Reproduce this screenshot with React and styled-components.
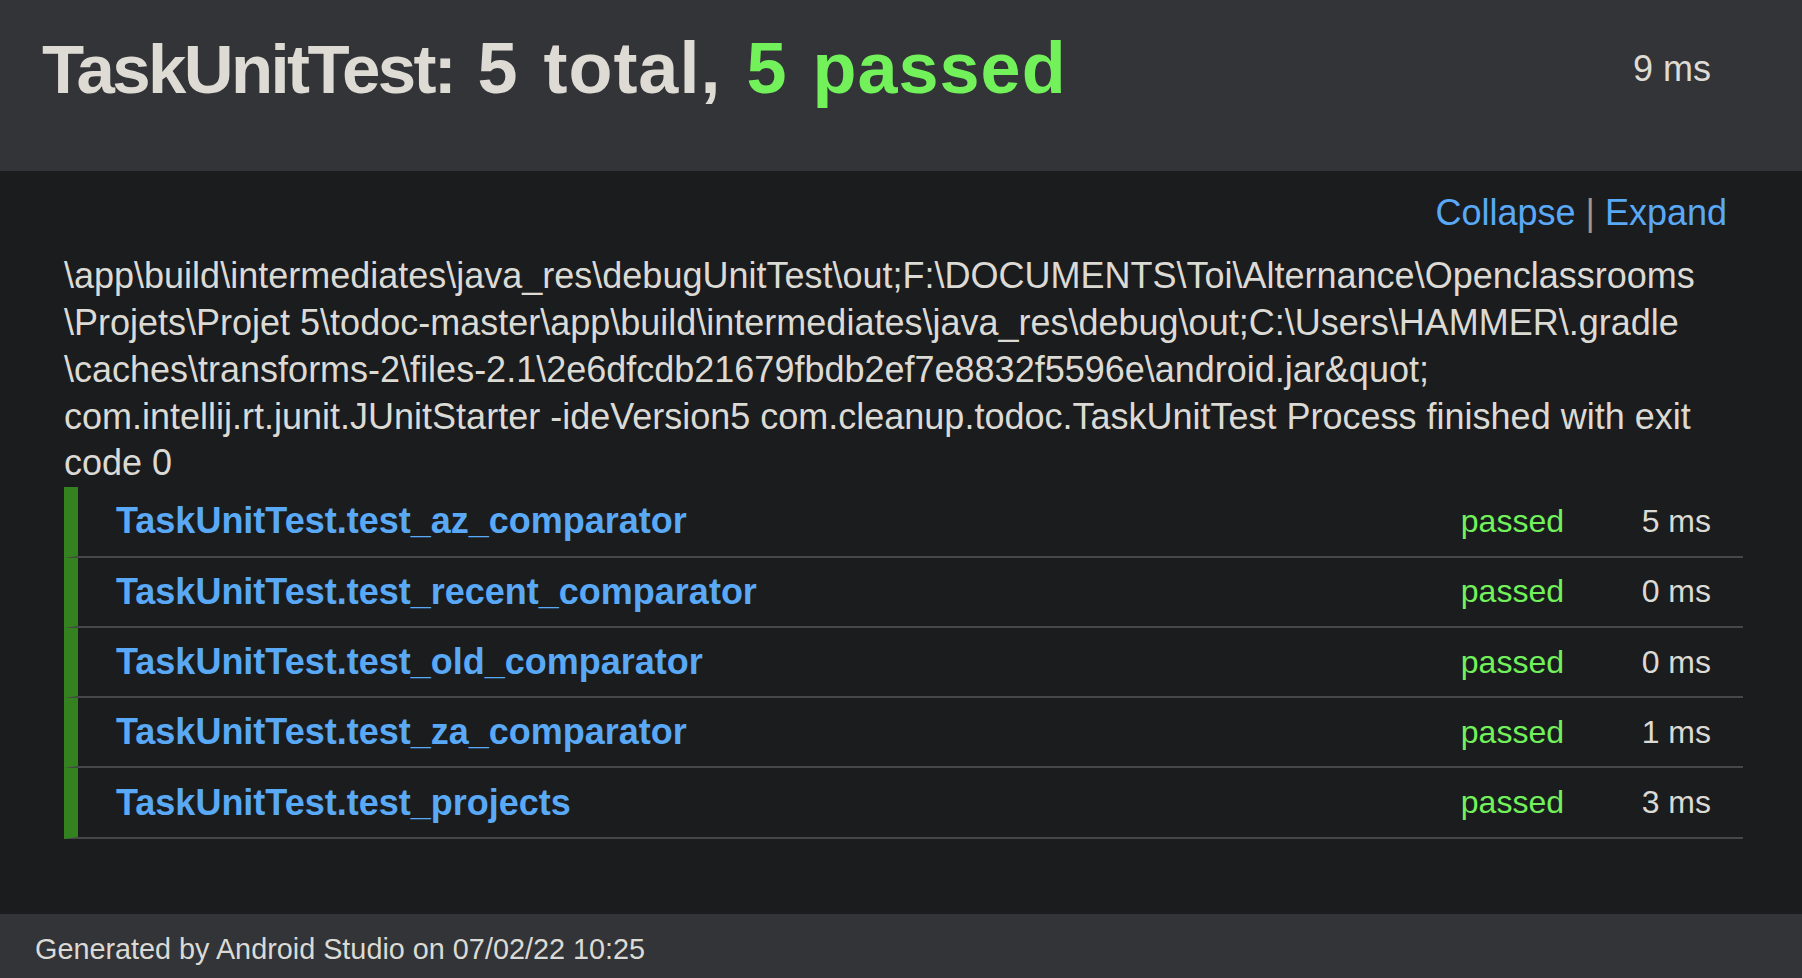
import React from "react";
import styled, { createGlobalStyle } from "styled-components";

const GlobalStyle = createGlobalStyle`
  html, body {
    margin: 0;
    padding: 0;
    background: #1b1c1e;
    overflow: hidden;
  }
  body {
    font-family: "Liberation Sans", Arial, sans-serif;
    color: #dcdad5;
  }
`;

const Page = styled.div`
  display: flex;
  flex-direction: column;
  min-height: 978px;
  background: #1b1c1e;
`;

const Header = styled.header`
  display: flex;
  justify-content: space-between;
  align-items: flex-start;
  height: 171px;
  box-sizing: border-box;
  padding: 27px 91px 0 42px;
  background: #323437;
`;

const Title = styled.h1`
  margin: 0;
  font-size: 69px;
  font-weight: 700;
  line-height: normal;
  color: #dedad4;
  white-space: nowrap;
  word-spacing: 4px;
`;

const SuiteName = styled.span`
  letter-spacing: -2.6px;
`;

const Counts = styled.span`
  font-size: 72px;
  letter-spacing: 1px;
`;

const Passed = styled.span`
  color: #72f15b;
`;

const TotalTime = styled.div`
  margin-top: 21px;
  font-size: 36px;
  line-height: normal;
  color: #dedad4;
`;

const Content = styled.main`
  flex: 1;
  padding: 19px 59px 74px 64px;
`;

const Toggles = styled.div`
  display: flex;
  justify-content: flex-end;
  gap: 10px;
  padding-right: 16px;
  font-size: 36px;
  line-height: 46.8px;
`;

const ToggleLink = styled.a`
  color: #5aa9f6;
  text-decoration: none;
  cursor: pointer;
`;

const Divider = styled.span`
  color: #a39684;
`;

const Output = styled.p`
  margin: 16.5px 0 0;
  font-size: 36px;
  line-height: 46.8px;
  color: #dcdad5;
`;

const TestList = styled.ul`
  list-style: none;
  margin: 0;
  padding: 0;
`;

const TestRow = styled.li`
  display: flex;
  align-items: center;
  height: 70.3px;
  box-sizing: border-box;
  padding: 0 32px 0 38px;
  border-left: 14px solid ${(p) => (p.$failed ? "#a3261f" : "#33821f")};
  border-bottom: 2px solid #464749;
`;

const TestName = styled.a`
  flex: 1;
  font-size: 36px;
  font-weight: 700;
  color: #5aa9f6;
  text-decoration: none;
  white-space: nowrap;
`;

const Status = styled.span`
  font-size: 32px;
  color: ${(p) => (p.$failed ? "#f05a5a" : "#72f15b")};
`;

const Duration = styled.span`
  width: 147px;
  text-align: right;
  font-size: 32px;
  color: #dcdad5;
`;

const Footer = styled.footer`
  padding: 19px 35px 12px;
  background: #323437;
  font-size: 28.8px;
  line-height: 33px;
  color: #dcdad5;
`;

const tests = [
  { name: "TaskUnitTest.test_az_comparator", time: "5 ms" },
  { name: "TaskUnitTest.test_recent_comparator", time: "0 ms" },
  { name: "TaskUnitTest.test_old_comparator", time: "0 ms" },
  { name: "TaskUnitTest.test_za_comparator", time: "1 ms" },
  { name: "TaskUnitTest.test_projects", time: "3 ms" },
];

const App = () => {
  return (
    <Page>
      <GlobalStyle />
      <Header>
        <Title>
          <SuiteName>TaskUnitTest:</SuiteName>{" "}
          <Counts>
            5 total, <Passed>5 passed</Passed>
          </Counts>
        </Title>
        <TotalTime>9 ms</TotalTime>
      </Header>
      <Content>
        <Toggles>
          <ToggleLink>Collapse</ToggleLink>
          <Divider>|</Divider>
          <ToggleLink>Expand</ToggleLink>
        </Toggles>
        <Output>
          {"\\app\\build\\intermediates\\java_res\\debugUnitTest\\out;F:\\DOCUMENTS\\Toi\\Alternance\\Openclassrooms"}
          <br />
          {"\\Projets\\Projet 5\\todoc-master\\app\\build\\intermediates\\java_res\\debug\\out;C:\\Users\\HAMMER\\.gradle"}
          <br />
          {"\\caches\\transforms-2\\files-2.1\\2e6dfcdb21679fbdb2ef7e8832f5596e\\android.jar&quot; com.intellij.rt.junit.JUnitStarter -ideVersion5 com.cleanup.todoc.TaskUnitTest Process finished with exit code 0"}
        </Output>
        <TestList>
          {tests.map((t) => (
            <TestRow key={t.name}>
              <TestName>{t.name}</TestName>
              <Status>passed</Status>
              <Duration>{t.time}</Duration>
            </TestRow>
          ))}
        </TestList>
      </Content>
      <Footer>Generated by Android Studio on 07/02/22 10:25</Footer>
    </Page>
  );
};

export default App;
